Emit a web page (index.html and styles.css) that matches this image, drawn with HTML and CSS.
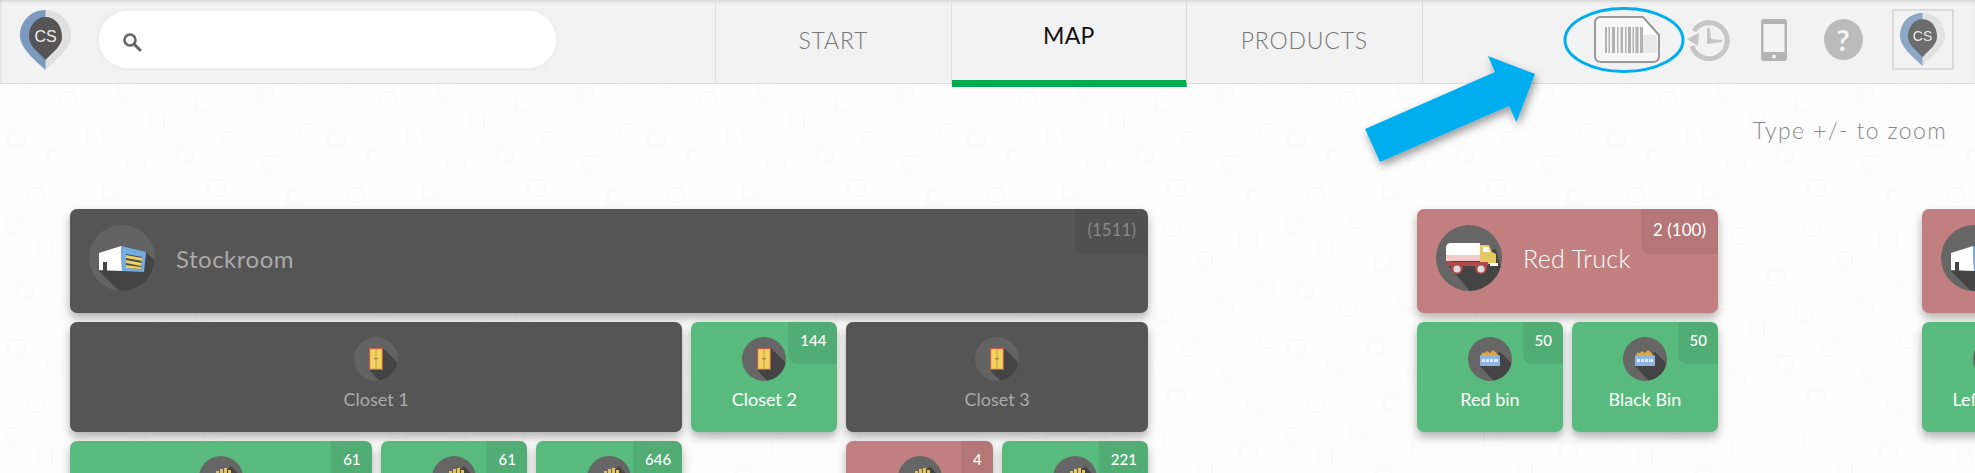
FILE: index.html
```html
<!DOCTYPE html>
<html lang="en">
<head>
  <meta charset="UTF-8">
  <title>Map</title>
  <link rel="stylesheet" href="styles.css">
</head>
<body>

<svg class="defs" width="0" height="0">
  <defs>
    <clipPath id="clip-big"><circle cx="33" cy="33" r="33"/></clipPath>
    <clipPath id="clip-small"><circle cx="22" cy="22" r="22"/></clipPath>
    <clipPath id="clip-left"><rect width="25.5" height="60"/></clipPath>

    <symbol id="i-logo" viewBox="0 0 51 60">
      <path fill="#e0e0e0" d="M25.5 0C11 0 0 11 0 26C0 38 15 50 25.5 60C36 50 51 38 51 26C51 11 40 0 25.5 0Z"/>
      <path fill="#7c9abf" clip-path="url(#clip-left)" d="M25.5 0C11 0 0 11 0 26C0 38 15 50 25.5 60C36 50 51 38 51 26C51 11 40 0 25.5 0Z"/>
      <path fill="#555" d="M25.5 7C35 7 42 15 42 27C42 36 33 42 25.5 50C18 42 9 36 9 27C9 15 16 7 25.5 7Z"/>
      <text class="logo-text" x="25.5" y="31.500" text-anchor="middle">CS</text>
    </symbol>

    <symbol id="i-warehouse" viewBox="0 0 66 66">
      <g clip-path="url(#clip-big)">
        <polygon fill="#444" points="10,46 55,46 57,27 100,70 70,100 40,76"/>
      </g>
      <polygon fill="#fff" points="10,28 32,21 33,46 10,45"/>
      <rect fill="#444" x="14" y="37" width="4" height="9"/>
      <polygon fill="#74abe0" points="32,21 57,27 55,47 33,46"/>
      <polygon fill="#4a4a4a" points="37,29 53,32 52,44 37,43"/>
      <polygon fill="#ecd05f" points="37,30 53,33 53,36 37,33"/>
      <polygon fill="#ecd05f" points="37,35 53,38 52,41 37,38"/>
      <polygon fill="#ecd05f" points="37,40 52,42 52,44 37,43"/>
    </symbol>

    <symbol id="i-truck" viewBox="0 0 66 66">
      <g clip-path="url(#clip-big)">
        <polygon fill="#444" points="10,38 60,24 64,40 100,76 66,100 34,66"/>
      </g>
      <path fill="#fff" d="M15 18H44V36H10V23Q10 18 15 18Z"/>
      <path fill="#eecccc" d="M10 30H44V36H10Z"/>
      <polygon fill="#e6c964" points="44,20 53,20 56,27 60,29 60,39 44,39"/>
      <polygon fill="#fff" points="47,22 52,22 54,27 47,27"/>
      <rect fill="#b34a4a" x="11" y="37" width="41" height="4"/>
      <rect fill="#fff" x="54" y="38" width="8" height="3"/>
      <circle fill="#b34a4a" cx="21" cy="43" r="6"/>
      <circle fill="#b34a4a" cx="45" cy="43" r="6"/>
      <circle fill="#ddd" cx="21" cy="44" r="3.5"/>
      <circle fill="#ddd" cx="45" cy="44" r="3.5"/>
    </symbol>

    <symbol id="i-door" viewBox="0 0 44 44">
      <g clip-path="url(#clip-small)">
        <polygon fill="#444" points="29,11 70,52 50,70 15,33"/>
      </g>
      <rect fill="#c0604a" x="15" y="11" width="14" height="22"/>
      <rect fill="#f3d35f" x="16.200" y="12.200" width="11.600" height="19.600"/>
      <rect fill="#b59a40" x="21.6" y="12" width="0.8" height="20"/>
      <rect fill="#a08a50" x="20" y="21" width="4" height="1.4"/>
    </symbol>

    <symbol id="i-bin" viewBox="0 0 44 44">
      <g clip-path="url(#clip-small)">
        <polygon fill="#444" points="32,15 70,52 50,70 12,29"/>
      </g>
      <path fill="#dca843" d="M13 19L14 15.500L17 16L19 14L22 16L25 13L28 15.500L31 19Z"/>
      <rect fill="#8fb6e0" x="12" y="18.500" width="20" height="10.500"/>
      <rect fill="#dfe9f5" x="14" y="22" width="16" height="3"/>
      <rect fill="#8fb6e0" x="17" y="22" width="1" height="3"/>
      <rect fill="#8fb6e0" x="21" y="22" width="1" height="3"/>
      <rect fill="#8fb6e0" x="25" y="22" width="1" height="3"/>
    </symbol>

    <symbol id="i-stack" viewBox="0 0 44 44">
      <g clip-path="url(#clip-small)">
        <polygon fill="#444" points="32,10 70,52 50,70 10,32"/>
      </g>
      <rect fill="#e4c25a" x="13" y="18" width="3" height="14"/>
      <rect fill="#e4c25a" x="17" y="15" width="3" height="17"/>
      <rect fill="#e4c25a" x="21" y="13" width="3" height="19"/>
      <rect fill="#e4c25a" x="25" y="12" width="3" height="20"/>
      <rect fill="#e4c25a" x="29" y="14" width="3" height="18"/>
    </symbol>

    <pattern id="tile-pattern" width="320" height="210" patternUnits="userSpaceOnUse">
      <g class="tile-lines">
        <rect x="6" y="8" width="15" height="15"/>
        <rect x="38" y="30" width="14" height="14"/>
        <rect x="70" y="4" width="16" height="14"/>
        <rect x="96" y="46" width="15" height="15"/>
        <rect x="132" y="18" width="14" height="16"/>
        <rect x="168" y="60" width="16" height="15"/>
        <rect x="204" y="12" width="15" height="14"/>
        <rect x="238" y="42" width="14" height="15"/>
        <rect x="280" y="22" width="16" height="16"/>
        <rect x="18" y="72" width="14" height="15"/>
        <rect x="60" y="92" width="15" height="14"/>
        <rect x="118" y="84" width="16" height="15"/>
        <rect x="150" y="112" width="14" height="16"/>
        <rect x="196" y="96" width="15" height="15"/>
        <rect x="258" y="88" width="14" height="14"/>
        <rect x="298" y="70" width="15" height="16"/>
        <rect x="8" y="130" width="16" height="15"/>
        <rect x="48" y="150" width="14" height="14"/>
        <rect x="88" y="128" width="15" height="16"/>
        <rect x="128" y="160" width="16" height="14"/>
        <rect x="178" y="146" width="14" height="15"/>
        <rect x="222" y="132" width="15" height="14"/>
        <rect x="262" y="156" width="16" height="15"/>
        <rect x="300" y="124" width="14" height="14"/>
        <rect x="28" y="188" width="15" height="14"/>
        <rect x="104" y="184" width="14" height="15"/>
        <rect x="208" y="180" width="16" height="16"/>
        <rect x="288" y="190" width="14" height="14"/>
      </g>
    </pattern>
  </defs>
</svg>

<svg class="tiles" width="1975" height="473"><rect width="1975" height="473" fill="url(#tile-pattern)"/></svg>

<header class="topbar">
  <svg class="logo" width="51" height="60"><use href="#i-logo"/></svg>
  <div class="search">
    <svg width="20" height="20" viewBox="0 0 20 20">
      <circle cx="8" cy="8" r="5.5" fill="none" stroke="#666" stroke-width="2.6"/>
      <line x1="12" y1="12" x2="18" y2="18" stroke="#666" stroke-width="3" stroke-linecap="round"/>
    </svg>
  </div>
  <nav class="nav">
    <a class="nav-item">START</a>
    <a class="nav-item active">MAP</a>
    <a class="nav-item">PRODUCTS</a>
  </nav>
  <div class="tools">
    <svg class="tool-barcode" width="66" height="47" viewBox="0 0 66 47">
      <path fill="#f7f7f7" stroke="#999" stroke-width="2" d="M7 1H49L65 19V40Q65 46 59 46H7Q1 46 1 40V7Q1 1 7 1Z"/>
      <path fill="#b2b2b2" d="M11 11h2v26h-2zM14.5 11h1.5v26h-1.500zM18 11h3v26h-3zM23 11h1.500v26h-1.500zM26.500 11h2.500v26h-2.500zM31 11h1.500v26h-1.500zM34 11h3v26h-3zM38.500 11h1.500v26h-1.500zM41.500 11h3v26h-3zM46 11h3v26h-3z"/>
      <path fill="#fff" d="M49 3L63 19H51Q49 19 49 17Z"/>
      <path fill="#d6d6d6" d="M49 19H63V37H49Z" opacity="0.45"/>
    </svg>
    <svg class="tool-clock" width="43" height="42" viewBox="0 0 43 42">
      <path fill="none" stroke="#c6c6c6" stroke-width="5" d="M7 12A18 18 0 1 1 5 27"/>
      <polygon fill="#c6c6c6" points="0,20 12,14 11,27"/>
      <polygon fill="#c6c6c6" points="20,9 23,9 24,20 35,21 35,23 20,25"/>
    </svg>
    <svg class="tool-phone" width="26" height="42" viewBox="0 0 26 42">
      <rect width="26" height="42" rx="3" fill="#b4b4b4"/>
      <rect x="2.500" y="5" width="21" height="28" fill="#f4f4f4"/>
      <circle cx="13" cy="37.500" r="2" fill="#f4f4f4"/>
    </svg>
    <div class="tool-help">?</div>
    <div class="avatar">
      <svg width="45" height="55"><use href="#i-logo"/></svg>
    </div>
  </div>
</header>

<div class="hint">Type +/- to zoom</div>

<main class="map">
  <section class="group group-stock">
    <div class="card head off span-7">
      <svg class="disc-big" width="66" height="66"><use href="#i-warehouse"/></svg>
      <span class="head-name">Stockroom</span>
      <span class="badge badge-big">(1511)</span>
    </div>
    <div class="card tile off span-4">
      <svg class="disc" width="44" height="44"><use href="#i-door"/></svg>
      <span class="tile-name">Closet 1</span>
    </div>
    <div class="card tile green">
      <svg class="disc" width="44" height="44"><use href="#i-door"/></svg>
      <span class="tile-name">Closet 2</span>
      <span class="badge">144</span>
    </div>
    <div class="card tile off span-2">
      <svg class="disc" width="44" height="44"><use href="#i-door"/></svg>
      <span class="tile-name">Closet 3</span>
    </div>
    <div class="card tile green span-2">
      <svg class="disc" width="44" height="44"><use href="#i-stack"/></svg>
      <span class="badge">61</span>
    </div>
    <div class="card tile green">
      <svg class="disc" width="44" height="44"><use href="#i-stack"/></svg>
      <span class="badge">61</span>
    </div>
    <div class="card tile green">
      <svg class="disc" width="44" height="44"><use href="#i-stack"/></svg>
      <span class="badge">646</span>
    </div>
    <div class="card tile red skip-2">
      <svg class="disc" width="44" height="44"><use href="#i-stack"/></svg>
      <span class="badge">4</span>
    </div>
    <div class="card tile green">
      <svg class="disc" width="44" height="44"><use href="#i-stack"/></svg>
      <span class="badge">221</span>
    </div>
  </section>

  <section class="group group-truck">
    <div class="card head red span-2">
      <svg class="disc-big" width="66" height="66"><use href="#i-truck"/></svg>
      <span class="head-name">Red Truck</span>
      <span class="badge badge-big">2 (100)</span>
    </div>
    <div class="card tile green">
      <svg class="disc" width="44" height="44"><use href="#i-bin"/></svg>
      <span class="tile-name">Red bin</span>
      <span class="badge">50</span>
    </div>
    <div class="card tile green">
      <svg class="disc" width="44" height="44"><use href="#i-bin"/></svg>
      <span class="tile-name">Black Bin</span>
      <span class="badge">50</span>
    </div>
  </section>

  <section class="group group-third">
    <div class="card head red span-2">
      <svg class="disc-big" width="66" height="66"><use href="#i-warehouse"/></svg>
    </div>
    <div class="card tile green">
      <svg class="disc" width="44" height="44"><use href="#i-bin"/></svg>
      <span class="tile-name">Left Closet</span>
    </div>
  </section>
</main>

<!-- callout drawn on top of the screenshot -->
<svg class="callout" width="1975" height="473">
  <defs>
    <filter id="arrow-shadow" x="-20%" y="-20%" width="140%" height="140%">
      <feDropShadow dx="2" dy="4" stdDeviation="4" flood-color="#000" flood-opacity="0.4"/>
    </filter>
  </defs>
  <ellipse cx="1624" cy="40" rx="59" ry="31.500" fill="none" stroke="#00aeef" stroke-width="3"/>
  <polygon fill="#00aeef" filter="url(#arrow-shadow)" points="1488,56 1535,74 1516.500,122 1509,106 1380,162 1365,129 1495,72"/>
</svg>

</body>
</html>
```

FILE: styles.css
```css
html, body { margin: 0; height: 473px; overflow: hidden; }
body { position: relative; width: 1975px; background: #fdfdfd; font-family: Lato, "Open Sans", sans-serif; }

.defs { position: absolute; }
.tiles { position: absolute; left: 0; top: 0; }
.tile-lines rect { fill: none; stroke: #f8f8f8; stroke-width: 1; }
.logo-text { font-family: "Liberation Sans", sans-serif; font-size: 16px; fill: #eee; }

/* top bar */
.topbar { position: relative; display: flex; align-items: center; box-sizing: border-box; height: 84px; padding-bottom: 4px; background: #f2f2f2; border-bottom: 1px solid #ddd; box-shadow: inset 0 3px 3px -1px rgba(0,0,0,.1), inset 3px 0 3px -2px rgba(0,0,0,.08); }
.logo { margin-left: 20px; flex: none; }
.search { display: flex; align-items: center; box-sizing: border-box; width: 457px; height: 57px; margin-left: 28px; padding-left: 23px; background: #fff; border-radius: 28px; box-shadow: 0 0 0 3px #eee; }
.search svg { margin-top: 4px; }

.nav { display: flex; align-self: flex-start; height: 83px; margin-left: 159px; border-left: 1px solid #ddd; }
.nav-item { display: flex; align-items: center; justify-content: center; box-sizing: border-box; width: 235.500px; height: 83px; padding-bottom: 3px; border-right: 1px solid #ddd; font-size: 23px; font-weight: 300; color: #777; letter-spacing: .8px; }
.nav-item.active { height: 87px; padding-bottom: 10px; border-bottom: 7px solid #00ab4e; color: #111; font-weight: 400; letter-spacing: .2px; }

.tools { display: flex; align-items: center; margin-left: 171px; }
.tool-clock { margin-left: 27px; }
.tool-phone { margin-left: 31px; }
.tool-help { display: flex; align-items: center; justify-content: center; width: 39px; height: 41px; margin-left: 37px; border-radius: 50%; background: #bbb; color: #f4f4f4; font-size: 29px; font-weight: 700; }
.avatar { display: flex; justify-content: center; align-items: center; box-sizing: border-box; width: 62px; height: 61px; margin-left: 29px; border: 2px solid #d8d8d8; opacity: .85; }

.hint { position: relative; box-sizing: border-box; height: 30px; margin-top: 31px; padding-right: 28px; line-height: 30px; font-size: 23px; font-weight: 300; color: #888; text-align: right; letter-spacing: 1.35px; }

/* map */
.map { position: relative; display: flex; margin-top: 64px; padding-left: 70px; }
.group { display: grid; flex: none; gap: 9px; grid-template-rows: 104px 110px 110px; }
.group-stock { grid-template-columns: repeat(7, 146.290px); }
.group-truck { grid-template-columns: repeat(2, 146px); margin-left: 269px; }
.group-third { grid-template-columns: repeat(2, 146px); margin-left: 204px; }
.span-2 { grid-column: span 2; }
.span-4 { grid-column: span 4; }
.span-7 { grid-column: span 7; }
.skip-2 { grid-column-start: 6; }

.card { position: relative; border-radius: 7px; box-shadow: 0 5px 10px rgba(0,0,0,.3); color: #fff; }
.card svg { border-radius: 50%; background: #666; flex: none; }
.off { background: #555; color: #aaa; }
.off svg { background: #636363; }
.green { background: #58bb7d; }
.red { background: #c27f7f; }

.head { display: flex; align-items: center; padding: 0 0 6px 19px; }
.head-name { margin-left: 21px; font-size: 25px; font-weight: 300; letter-spacing: .3px; }
.off .head-name { font-weight: 400; font-size: 24px; letter-spacing: .5px; }

.tile { display: flex; flex-direction: column; align-items: center; padding-top: 15px; box-sizing: border-box; }
.tile-name { margin-top: 7px; font-size: 18px; line-height: 22px; }

.badge { position: absolute; right: 0; top: 0; box-sizing: border-box; height: 42px; padding: 9px 11px 0 12px; font-size: 15px; line-height: 18px; font-weight: 500; background: rgba(0,0,0,.07); border-radius: 0 7px 0 9px; }
.badge-big { height: 45px; padding: 10px 12px 0 12px; font-size: 17px; line-height: 22px; font-weight: 400; }
.off .badge { color: #888; background: rgba(0,0,0,.05); }

.callout { position: absolute; left: 0; top: 0; pointer-events: none; }
```
